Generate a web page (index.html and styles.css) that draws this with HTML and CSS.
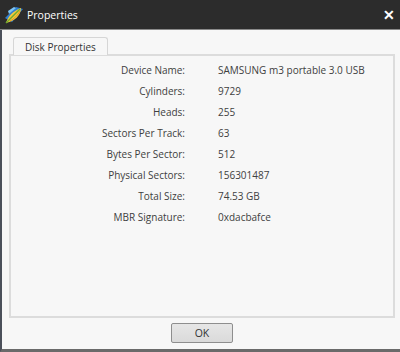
FILE: index.html
```html
<html lang="en">
<head>
    <meta charset="UTF-8">
    <title>Properties</title>
    <link rel="stylesheet" href="styles.css">
</head>
<body>
    <div class="window">
        <div class="titlebar">
            <svg class="appicon" width="20" height="20" viewBox="0 0 20 20">
                <path d="M1 13 L12 2 L19 4 L8 17 Z" fill="#2f7fd0"/>
                <path d="M4 6 L10 2 L12 3 L5 9 Z" fill="#7cc4f5"/>
                <path d="M2 18 C4 11 9 6 17 3 C17 10 11 16 2 18 Z" fill="#f4c83c"/>
                <path d="M2 18 C6 14 11 9 16 4" stroke="#6eaa2e" stroke-width="1.5" fill="none"/>
                <path d="M6 16 C10 14 14 10 16 6" stroke="#e39b20" stroke-width="1" fill="none"/>
            </svg>
            <span class="title">Properties</span>
            <span class="close">&#x2715;</span>
        </div>
        <div class="content">
            <div class="tabs">
                <div class="tab">Disk Properties</div>
            </div>
            <div class="panel">
                <div class="grid">
                    <div class="label">Device Name:</div><div class="value">SAMSUNG m3 portable 3.0 USB</div>
                    <div class="label">Cylinders:</div><div class="value">9729</div>
                    <div class="label">Heads:</div><div class="value">255</div>
                    <div class="label">Sectors Per Track:</div><div class="value">63</div>
                    <div class="label">Bytes Per Sector:</div><div class="value">512</div>
                    <div class="label">Physical Sectors:</div><div class="value">156301487</div>
                    <div class="label">Total Size:</div><div class="value">74.53 GB</div>
                    <div class="label">MBR Signature:</div><div class="value">0xdacbafce</div>
                </div>
            </div>
            <div class="buttons">
                <button class="ok">OK</button>
            </div>
        </div>
    </div>
</body>
</html>
```

FILE: styles.css
```css
*{
    margin: 0; padding: 0;
    box-sizing: border-box;
}
body{
    width: 400px;
    height: 352px;
    overflow: hidden;
    font-family: 'Open Sans', sans-serif;
    font-size: 10px;
    color: #404040;
}
.window{
    height: 352px;
    display: flex;
    flex-direction: column;
    background: #f7f7f7;
    border-left: 2px solid #4b505a;
    border-bottom: 3px solid #6a6a6a;
}
.titlebar{
    height: 30px;
    margin-left: -2px;
    background: #2c2c2c;
    border-bottom: 1px solid #8a8a8a;
    display: flex;
    align-items: center;
    padding-left: 4px;
    padding-right: 5px;
    color: #fff;
}
.appicon{
    margin-right: 3px;
}
.title{
    font-size: 10.5px;
    flex: 1;
}
.close{
    font-size: 14px;
    font-weight: bold;
}
.content{
    flex: 1;
    display: flex;
    flex-direction: column;
    padding: 7px 5px 0 7px;
}
.tabs{
    display: flex;
    padding-left: 4px;
}
.tab{
    height: 18px;
    margin-bottom: -1px;
    padding: 2px 11px 0 11px;
    background: #f7f7f7;
    border: 1px solid #d6d6d6;
    border-bottom: none;
    border-radius: 3px 3px 0 0;
    position: relative;
    color: #333;
}
.panel{
    height: 264px;
    border: 2px solid #dcdcdc;
    padding-top: 7px;
}
.grid{
    display: grid;
    grid-template-columns: 174px auto;
    column-gap: 33px;
    row-gap: 6px;
    line-height: 15px;
}
.label{
    text-align: right;
}
.buttons{
    display: flex;
    justify-content: center;
    padding-top: 5px;
}
.ok{
    width: 62px;
    height: 20px;
    font-family: 'Open Sans', sans-serif;
    font-size: 10.5px;
    color: #333;
    background: linear-gradient(#e6e6e6, #dadada);
    border: 1px solid #8e8e8e;
    border-radius: 2px;
}
```
